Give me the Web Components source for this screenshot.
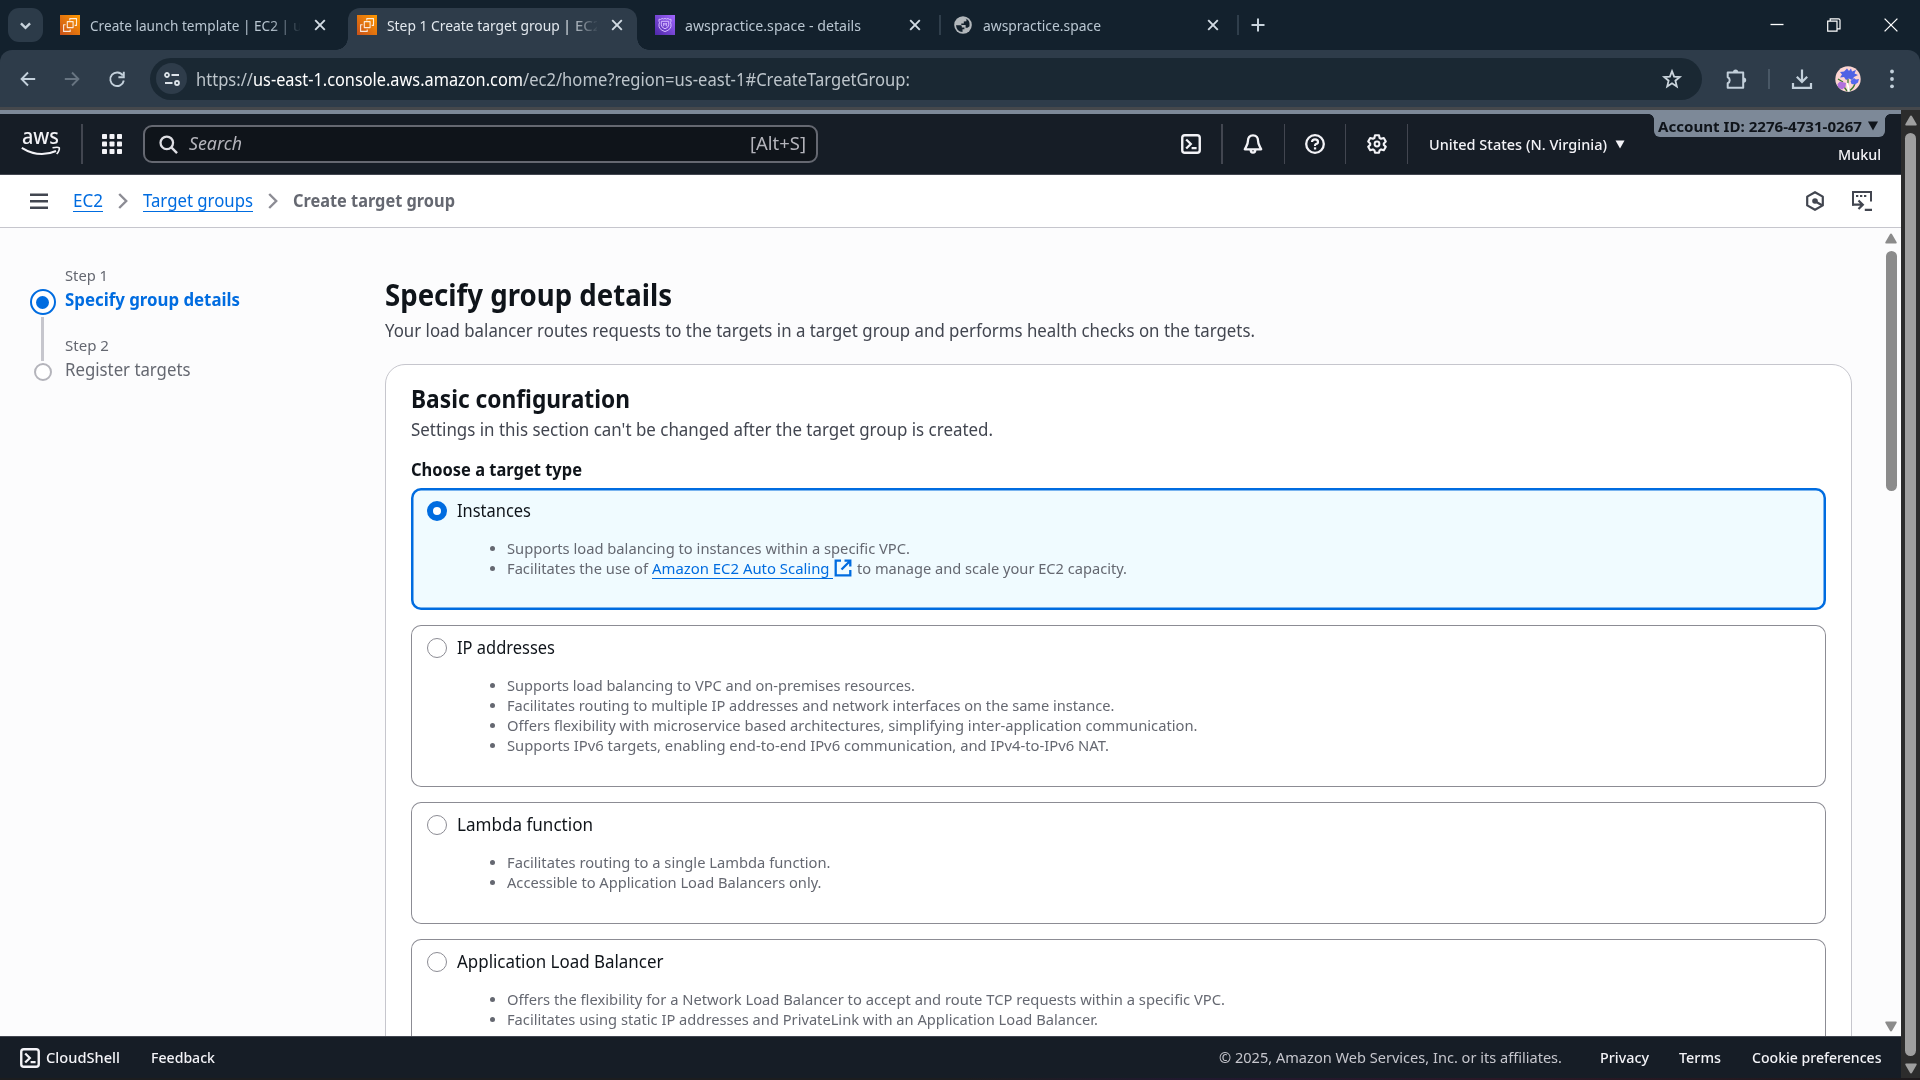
<!DOCTYPE html>
<html lang="en">
<head>
<meta charset="utf-8">
<title>Step 1 Create target group | EC2</title>
<style>
html,body{margin:0;width:1920px;height:1080px;overflow:hidden;background:#13212d}
body{font-family:"Noto Sans","Open Sans",sans-serif;font-size:17.5px;line-height:25px;color:#0f141a}
</style>
</head>
<body>
<app-window></app-window>
<script>
const make = (name, css, html, extra) => {
  const t = document.createElement('template');
  t.innerHTML = `<style>*{box-sizing:border-box}${css}</style>${html}`;
  customElements.define(name, class extends HTMLElement {
    constructor(){ super(); this.attachShadow({mode:'open'}).append(t.content.cloneNode(true)); }
    connectedCallback(){ if(extra) extra(this, this.shadowRoot); }
  });
};

const ICONS = {
  chevdown:['0 0 12 12','<path d="M1.8 4l4.2 4.2L10.200 4" fill="none" stroke="currentColor" stroke-width="2.200"/>'],
  x:['0 0 12 12','<path d="M1.200 1.200l9.600 9.600M10.800 1.200L1.200 10.800" stroke="currentColor" stroke-width="1.900"/>'],
  plus:['0 0 14 14','<path d="M7 .5v13M.5 7h13" stroke="currentColor" stroke-width="2"/>'],
  ec2:['0 0 20 20','<defs><linearGradient id="g" x1="0" y1="1" x2="1" y2="0"><stop offset="0" stop-color="#c8511b"/><stop offset="1" stop-color="#f90"/></linearGradient></defs><path d="M0 0h20v20H0z" fill="url(#g)"/><path d="M9.800 5.500V3.600h6.700v6.800h-1.800M7.300 6.600h5.800v6H7.300zM5.600 9.700H3.600v6.700h6.600v-1.900" fill="none" stroke="#fff" stroke-opacity=".85" stroke-width="1.100" stroke-linejoin="round"/>'],
  shield:['0 0 20 20','<defs><linearGradient id="g" x1="0" y1="1" x2="1" y2="0"><stop offset="0" stop-color="#4d27a8"/><stop offset="1" stop-color="#a166ff"/></linearGradient></defs><path d="M0 0h20v20H0z" fill="url(#g)"/><path d="M4 4.200q2 .8 3-.7q1.500 1 3 0q1.500 1 3 0q1 1.500 3 .7v2q-1 1.300 0 3.200q.8 5-6 7.200q-6.800-2.200-6-7.200q1-1.900 0-3.200z M6.300 6.300h7.400v3.500q0 2.800-3.700 4q-3.700-1.200-3.700-4zM8.700 11.200V8l1.300 1.500L11.300 8v3.200" fill="none" stroke="#d5bcff" stroke-width="1"/>'],
  globe:['0 0 18 18','<circle cx="9" cy="9" r="8.800" fill="#b2b7bb"/><path d="M2 9.200h4.600q1.200.1 1.200 1.300v1h2.600v1.800h-1.900v2.600Q2.600 15.800 2 9.200zM10.600 2l1.800 1v2.200l-2.600.3v1.900H7.300v1.700h4.300v2.600h1.900l2-1.500Q16.600 4 10.600 2z" fill="#13212d"/>'],
  back:['0 0 16 16','<path d="M15.200 8H2M8 1.500L1.600 8 8 14.500" fill="none" stroke="currentColor" stroke-width="1.900"/>'],
  fwd:['0 0 16 16','<path d="M.8 8H14M8 1.500L14.400 8 8 14.500" fill="none" stroke="currentColor" stroke-width="1.900"/>'],
  reload:['0 0 16 16','<path d="M13.800 4.500A6.800 6.800 0 1 0 14.800 9.500M14.800 .8v5.400H9.400" fill="none" stroke="currentColor" stroke-width="1.900"/>'],
  tune:['0 0 16 14','<g fill="none" stroke="currentColor" stroke-width="1.800"><circle cx="3" cy="3" r="2"/><path d="M7.500 3H15M1 11h7.500"/><circle cx="13" cy="11" r="2"/></g>'],
  star:['0 0 20 20','<path d="M10 2.200l2.100 5.400 5.700.4-4.400 3.700 1.400 5.700-4.800-3.100-4.800 3.100 1.400-5.700L2.200 8l5.700-.4z" fill="none" stroke="currentColor" stroke-width="1.800"/>'],
  puzzle:['0 0 22 22','<path d="M2.700 4.400h15.500v15.400H2.700v-4.500q2-.8 2-3t-2-3z" fill="none" stroke="currentColor" stroke-width="2" stroke-linejoin="round"/><path d="M8 4.200a2.600 2.800 0 0 1 5.200 0zM18.600 9.500a2.600 2.600 0 0 1 0 5.200z" fill="currentColor"/>'],
  download:['0 0 22 22','<path d="M11 1.500v12M5.800 8.800l5.200 5.200 5.200-5.200M2 15v4.800h18V15" fill="none" stroke="currentColor" stroke-width="2.200"/>'],
  dots:['0 0 4 20','<circle cx="2" cy="2.500" r="1.900"/><circle cx="2" cy="10" r="1.900"/><circle cx="2" cy="17.300" r="1.900"/>'],
  avatar:['0 0 26 26','<defs><clipPath id="c"><circle cx="13" cy="13" r="12.700"/></clipPath></defs><g clip-path="url(#c)"><path d="M0 0h26v26H0z" fill="#fdd5d2"/><path d="M13 13v5l1 8M20 17q-1 5-6 8M3 13l5 3M7 18l5 7" fill="none" stroke="#3b7a2e" stroke-width="1.300"/><path d="M12.500 17l1.500 9" stroke="#fff" stroke-width="2"/><path d="M12 2.500l2 2.500 2-2.500 1 3 4-1.500-1.500 3.500 3.500 1.500-4 2-2 3-3-1.500-3 1.500-2-3-4 .5 2-3L5 6l4-.5z" fill="#4f62e4"/><path d="M19 12l2 1.500 3-.5-1 3.500-3 2-3.500-.5-1-3z" fill="#5568ee"/><path d="M5 15.500l2.500.5 3.500 1-.5 4-3.500 2.500-4-2-.5-3.500z" fill="#b070dd"/></g>'],
  min:['0 0 14 14','<path d="M.5 6.500h13" stroke="currentColor" stroke-width="1.300"/>'],
  restore:['0 0 14 14','<path d="M.7 3.200h9.300v10H.7zM3.200 2.800V.8h8.300q1.500 0 1.500 1.500v8.500h-2.500" fill="none" stroke="currentColor" stroke-width="1.200"/>'],
  close:['0 0 14 14','<path d="M.6.6l12.800 12.800M13.400.6L.6 13.400" stroke="currentColor" stroke-width="1.300"/>'],
  smile:['0 0 40 11','<path d="M.8 1.800Q18 12.500 35 5" fill="none" stroke="currentColor" stroke-width="2"/><path d="M31.500 1.800q5.500-1.200 6.800 0q.5 2.400-2.600 6.300" fill="none" stroke="currentColor" stroke-width="1.600"/>'],
  apps:['0 0 20 20','<g><rect width="5" height="5" rx=".8"/><rect x="7.500" width="5" height="5" rx=".8"/><rect x="15" width="5" height="5" rx=".8"/><rect y="7.500" width="5" height="5" rx=".8"/><rect x="7.500" y="7.500" width="5" height="5" rx=".8"/><rect x="15" y="7.500" width="5" height="5" rx=".8"/><rect y="15" width="5" height="5" rx=".8"/><rect x="7.500" y="15" width="5" height="5" rx=".8"/><rect x="15" y="15" width="5" height="5" rx=".8"/></g>'],
  search:['0 0 20 20','<circle cx="8.200" cy="8.200" r="6.600" fill="none" stroke="currentColor" stroke-width="2.400"/><path d="M13 13l6 6" stroke="currentColor" stroke-width="2.500"/>'],
  shell:['0 0 20 20','<rect x="1.250" y="1.250" width="17.500" height="17.500" rx="2.600" fill="none" stroke="currentColor" stroke-width="2.400"/><path d="M5.200 5.500l4.600 4.500-4.600 4.500M10.600 14.200h5" fill="none" stroke="currentColor" stroke-width="2.300"/>'],
  bell:['0 0 20 20','<path d="M10 1.300c-3.600 0-5 2.700-5 5.200 0 4.200-1.700 5.700-3.200 8.800h16.400C16.700 12.200 15 10.700 15 6.500c0-2.500-1.400-5.200-5-5.200zM7.600 15.500q0 3.100 2.400 3.100t2.400-3.100" fill="none" stroke="currentColor" stroke-width="2.300" stroke-linejoin="round"/>'],
  help:['0 0 20 20','<circle cx="10" cy="10" r="8.800" fill="none" stroke="currentColor" stroke-width="2.300"/><path d="M7 8Q7 5.300 10 5.300T13 7.900Q13 9.600 10.900 10Q10 10.300 10 12" fill="none" stroke="currentColor" stroke-width="2.200"/><path d="M8.900 13.300h2.300v2.200H8.900z"/>'],
  gear:['0 0 20 20','<path d="M8 1.300h4l.6 2.700 1.500.8 2.700-.8 2 3.500-2 1.900v1.500l2 1.800-2 3.500-2.700-.8-1.500.9-.6 2.500H8l-.6-2.500-1.500-.9-2.700.8-2-3.500 2-1.800V9.400l-2-1.900 2-3.500 2.700.8L7.400 4z" fill="none" stroke="currentColor" stroke-width="2.100" stroke-linejoin="round"/><circle cx="10" cy="10" r="2.400" fill="none" stroke="currentColor" stroke-width="2"/>'],
  down:['0 0 10 10','<path d="M0 .5h10L5 9.500z"/>'],
  up:['0 0 12 11','<path d="M6 .5q.7 0 1.200.9l4.500 7.800q.3 1.300-.8 1.300H1.100Q0 10.500.3 9.200l4.500-7.800Q5.300.5 6 .5z"/>'],
  dn:['0 0 12 11','<path d="M6 10.500q-.7 0-1.200-.9L.3 1.800Q0 .5 1.100.5h9.800q1.100 0 .8 1.300L7.200 9.600q-.5.9-1.200.9z"/>'],
  menu:['0 0 18 16','<path d="M0 1.700h18M0 8.200h18M0 14.700h18" stroke="currentColor" stroke-width="2.500"/>'],
  crumb:['0 0 10 16','<path d="M1.200 1l7 7-7 7" fill="none" stroke="currentColor" stroke-width="2.400"/>'],
  hex:['0 0 20 20','<path d="M10 1.200l7.800 4.400v8.800L10 18.800l-7.800-4.400V5.600z" fill="none" stroke="currentColor" stroke-width="2.200" stroke-linejoin="round"/><circle cx="10" cy="10" r="2.800"/><path d="M10.500 10.500l6.500 3.700" stroke="currentColor" stroke-width="2.200"/>'],
  panel:['0 0 20 20','<path d="M1 14.600V1h18v9.500" fill="none" stroke="currentColor" stroke-width="2"/><path d="M4 4h2.300v2H4zM8 4h2.300v2H8zM12 4h2.300v2H12zM12.800 17.800H20V20h-7.200z"/><path d="M0 13.700h10M6.500 9.500l4.300 4.200-4.300 4.300" fill="none" stroke="currentColor" stroke-width="2.200"/>'],
  ext:['0 0 18 18','<path d="M7 1.700H1.700v14.600h14.600V11M10.500 1.700h5.800v5.800M16 2L7.500 10.500" fill="none" stroke="currentColor" stroke-width="2.300"/>'],
};

make('ui-icon', ':host{display:block;flex:none}svg{display:block;width:100%;height:100%;fill:currentColor;overflow:visible}', '<div></div>', (h, r) => {
  const i = ICONS[h.getAttribute('name')];
  const w = h.getAttribute('w') || 20, ht = h.getAttribute('h') || w;
  h.style.width = w + 'px'; h.style.height = ht + 'px';
  const d = r.querySelector('div'); d.style.cssText = 'width:100%;height:100%';
  d.innerHTML = `<svg viewBox="${i[0]}">${i[1]}</svg>`;
});

make('v-bar', ':host{display:block;flex:none;width:2px;height:40px;background:#424650}', '');

make('browser-tab', `
:host{display:flex;align-items:center;flex:none;width:297.500px;height:50px;padding:0 0 0 9px;position:relative;font-size:15px;line-height:20px;color:#b9c6d1}
:host([active]){color:#e2e8ee}
:host([active])::before{content:"";position:absolute;z-index:0;left:0;top:8px;width:289px;height:42px;background:#2e3c4a;border-radius:12px 12px 0 0}
.fl{display:none}
:host([active]) .fl{display:block;position:absolute;bottom:0;width:12px;height:12px}
.l{left:-12px;background:radial-gradient(circle at 0 0,transparent 11.500px,#2e3c4a 12px)}
.r{left:289px;background:radial-gradient(circle at 100% 0,transparent 11.500px,#2e3c4a 12px)}
.t{position:relative;flex:none;display:flex;gap:4px;width:210px;height:20px;margin-left:10px;overflow:hidden;white-space:nowrap;-webkit-mask:linear-gradient(90deg,#000 180px,transparent 212px)}
.x{position:relative;margin-left:14px;color:#d3dce4}
.ic{position:relative;width:20px;display:flex;justify-content:center}
.s{width:2px;height:20px;background:#2f3e4b;margin-left:18px;display:none}
:host([sep]) .s{display:block}`,
'<i class="fl l"></i><i class="fl r"></i><div class="ic"><slot name="icon"></slot></div><div class="t"><slot></slot></div><ui-icon class="x" name="x" w="12"></ui-icon><div class="s"></div>');

make('tab-strip', `:host{display:flex;height:50px;align-items:center;padding-left:8px;background:#13212d;color:#c8d3dc}
.b{width:35px;height:34px;border-radius:11px;background:#2c3b49;display:flex;align-items:center;justify-content:center;margin-right:8px}
.w{margin-left:auto;display:flex;gap:43px;align-items:center;padding-right:22px;color:#fff}`,
`<div class="b"><ui-icon name="chevdown" w="13"></ui-icon></div>
<browser-tab><ui-icon slot="icon" name="ec2"></ui-icon><fit-text w="199">Create launch template | EC2 |</fit-text><span>u</span></browser-tab>
<browser-tab active style="margin-left:-.5px;margin-right:.5px"><ui-icon slot="icon" name="ec2"></ui-icon><fit-text w="184">Step 1 Create target group |</fit-text><span>EC2</span></browser-tab>
<browser-tab sep><ui-icon slot="icon" name="shield"></ui-icon><fit-text w="176">awspractice.space - details</fit-text></browser-tab>
<browser-tab sep><ui-icon slot="icon" name="globe" w="18"></ui-icon><fit-text w="118">awspractice.space</fit-text></browser-tab>
<ui-icon name="plus" w="14" style="margin-left:10px"></ui-icon>
<div class="w"><ui-icon name="min" w="14"></ui-icon><ui-icon name="restore" w="14"></ui-icon><ui-icon name="close" w="14"></ui-icon></div>`);

make('address-bar', `:host{display:block;background:#13212d}
.in{display:flex;align-items:center;height:57px;background:#2e3c4a;border-radius:12px 12px 0 0;padding:0 26px 0 20px;color:#c3d0db}
.u{display:flex;align-items:center;width:1552px;height:42px;margin-left:25px;border-radius:21px;background:#1a2833;padding:0 20px 0 6px;color:#bdc5cb;font-size:17.500px}
.u fit-text{margin-top:1px}
.c{width:31px;height:31px;border-radius:50%;background:#2e3c4a;display:flex;align-items:center;justify-content:center;margin-right:9px;color:#dce3e9}
.h{color:#fff}`,
`<div class="in"><ui-icon name="back" w="16"></ui-icon><ui-icon name="fwd" w="16" style="margin-left:28px;color:#677481"></ui-icon><ui-icon name="reload" w="16" style="margin-left:29px"></ui-icon>
<div class="u"><div class="c"><ui-icon name="tune" w="16" h="14"></ui-icon></div><fit-text w="57">https://</fit-text><fit-text class="h" w="270">us-east-1.console.aws.amazon.com</fit-text><fit-text w="387">/ec2/home?region=us-east-1#CreateTargetGroup:</fit-text><ui-icon name="star" w="20" style="margin-left:auto;color:#cbd5dd"></ui-icon></div>
<ui-icon name="puzzle" w="22" style="margin-left:23px"></ui-icon><v-bar style="height:20px;background:#495866;margin-left:21px"></v-bar><ui-icon name="download" w="22" style="margin-left:21px"></ui-icon><ui-icon name="avatar" w="26" style="margin-left:22px"></ui-icon><ui-icon name="dots" w="4" h="20" style="margin-left:29px"></ui-icon></div>`);

make('aws-header', `:host{display:flex;align-items:center;height:65px;background:#161d26;border-top:4px solid #7d8998;border-bottom:1px solid #424650;color:#f3f3f7;font-size:15px;line-height:20px;font-weight:500}
.logo{width:40px;margin:0 20px 0 21px;height:60px;display:flex;flex-direction:column;padding-top:12px}
.logo fit-text{font-size:21px;line-height:20px;height:20px;font-weight:500;margin-left:1px}
.s{display:flex;align-items:center;width:675px;height:38px;margin-left:21px;border:2px solid #656871;border-radius:9px;background:#0f141a;padding:0 10px 0 14px;font-size:17.500px;line-height:24px;color:#b4b4bb;font-weight:400}
.s fit-text{margin-top:-2px}
.s ui-icon{color:#dedee3;margin-right:11px}
.s .k{margin-left:auto}
.acc{align-self:flex-start;margin-left:auto;margin-right:16px;width:231px;display:flex;flex-direction:column;align-items:flex-end}
.badge{position:relative;width:231px;height:23px;background:#7d8998;border-radius:0 0 6px 6px;color:#0f141a;display:flex;align-items:center;padding:4px 7px 4px 4px;font-weight:700;justify-content:space-between}
.badge::before,.badge::after{content:"";position:absolute;top:0;width:5px;height:5px}
.badge::before{left:-5px;background:radial-gradient(circle at 0 100%,transparent 4.500px,#7d8998 5px)}
.badge::after{right:-5px;background:radial-gradient(circle at 100% 100%,transparent 4.500px,#7d8998 5px)}
.m{margin:7px 4px 0 0}`,
`<div class="logo"><fit-text w="37">aws</fit-text><ui-icon name="smile" w="40" h="11"></ui-icon></div><v-bar></v-bar><ui-icon name="apps" style="margin-left:19px"></ui-icon>
<div class="s"><ui-icon name="search" w="19"></ui-icon><fit-text w="53" style="font-style:italic">Search</fit-text><fit-text class="k" w="56">[Alt+S]</fit-text></div>
<ui-icon name="shell" style="margin-left:363px"></ui-icon><v-bar style="margin-left:20px"></v-bar><ui-icon name="bell" style="margin-left:20px"></ui-icon><v-bar style="margin-left:21px;width:1px"></v-bar><ui-icon name="help" style="margin-left:20px"></ui-icon><v-bar style="margin-left:20px;width:1px"></v-bar><ui-icon name="gear" style="margin-left:21px"></ui-icon><v-bar style="margin-left:20px;width:1px"></v-bar>
<fit-text w="178" style="margin-left:21px">United States (N. Virginia)</fit-text><ui-icon name="down" w="10" h="9" style="margin-left:8px"></ui-icon>
<div class="acc"><div class="badge"><fit-text w="204">Account ID: 2276-4731-0267</fit-text><ui-icon name="down" w="10" h="10"></ui-icon></div><fit-text class="m" w="43">Mukul</fit-text></div>`);

make('crumb-bar', `:host{display:flex;align-items:center;height:53px;background:#fff;border-bottom:1px solid #c6c6cd;padding:0 29px 0 30px;color:#424650}
.a{color:#006ce0;border-bottom:1px solid #006ce0;height:22px;line-height:22px;margin-top:-1px}
.c{color:#8c8c94;margin:0 15px}
.b{font-weight:700;color:#656871;margin:-2px 0 0 0}`,
`<ui-icon name="menu" w="18" h="16"></ui-icon><fit-text class="a" w="30" style="margin-left:25px">EC2</fit-text><ui-icon class="c" name="crumb" w="10" h="16"></ui-icon><fit-text class="a" w="110">Target groups</fit-text><ui-icon class="c" name="crumb" w="10" h="16"></ui-icon><fit-text class="b" w="162">Create target group</fit-text>
<ui-icon name="hex" style="margin-left:auto"></ui-icon><ui-icon name="panel" style="margin-left:27px"></ui-icon>`);

make('step-nav', `:host{display:flex;width:385px;flex:none;padding:37px 0 0 29px;color:#656871}
.m{width:27px;display:flex;flex-direction:column;align-items:center;padding-top:24px;gap:2px;flex:none}
.on{width:26px;height:26px;border:2.500px solid #006ce0;border-radius:50%;padding:4.500px;background:#fff}
.on::before{content:"";display:block;width:100%;height:100%;border-radius:50%;background:#006ce0}
.ln{width:3px;height:44px;background:#c6c6cd}
.off{width:18px;height:18px;border:2.500px solid #b4b4bb;border-radius:50%;background:#fff}
.t{margin-left:8.500px}
.s{font-size:15px;line-height:20px}
.b{font-weight:700;color:#006ce0;margin:2px 0 23px}
.n{margin-top:2px}`,
`<div class="m"><div class="on"></div><div class="ln"></div><div class="off"></div></div>
<div class="t"><fit-text class="s" w="43">Step 1</fit-text><fit-text class="b" w="175">Specify group details</fit-text><fit-text class="s" w="44">Step 2</fit-text><fit-text class="n" w="125.500">Register targets</fit-text></div>`);

make('bullet-row', `:host{display:flex;align-items:center;height:20px;font-size:15px;line-height:20px;color:#656871}
i{width:5px;height:5px;border-radius:50%;background:#656871;margin:0 12px 0 79px}`, '<i></i><slot></slot>');

make('option-tile', `:host{display:block;height:122px;padding:10px 0 0 0;border-radius:10px;box-shadow:inset 0 0 0 1px #8c8c94;margin-bottom:15px;background:#fff}
:host([tall]){height:162px}
:host([selected]){background:#f0fbff;box-shadow:inset 0 0 0 2.500px #006ce0}
.h{display:flex;align-items:center;height:25px;padding-left:16px;margin-bottom:15px}
.r{width:20px;height:20px;border-radius:50%;border:1.300px solid #8c8c94;background:#fff;margin-right:10px}
:host([selected]) .r{border:6px solid #006ce0}`,
'<div class="h"><div class="r"></div><slot name="label"></slot></div><slot></slot>');

make('config-card', `:host{display:block;height:1000px;border:1px solid #c6c6cd;border-radius:20px;background:#fff;padding:18px 25px}
.h{font-size:25px;line-height:30px;font-weight:700}
.d{color:#424650;margin:4px 0 15px}
.l{font-weight:700;margin-bottom:6px}
.a{color:#006ce0;border-bottom:1.250px solid #006ce0;height:20px;line-height:20px;margin:1px 0 0 4px;padding-right:3px}
bullet-row ui-icon{color:#006ce0}`,
`<fit-text class="h" w="219">Basic configuration</fit-text><fit-text class="d" w="582">Settings in this section can't be changed after the target group is created.</fit-text><fit-text class="l" w="171">Choose a target type</fit-text>
<option-tile selected><fit-text slot="label" w="74">Instances</fit-text>
<bullet-row><fit-text w="403">Supports load balancing to instances within a specific VPC.</fit-text></bullet-row>
<bullet-row><fit-text w="141">Facilitates the use of</fit-text><fit-text class="a" w="177.500">Amazon EC2 Auto Scaling</fit-text><ui-icon name="ext" w="18" style="margin:0 5px 0 1px"></ui-icon><fit-text w="270">to manage and scale your EC2 capacity.</fit-text></bullet-row></option-tile>
<option-tile tall><fit-text slot="label" w="98">IP addresses</fit-text>
<bullet-row><fit-text w="408">Supports load balancing to VPC and on-premises resources.</fit-text></bullet-row>
<bullet-row><fit-text w="607.500">Facilitates routing to multiple IP addresses and network interfaces on the same instance.</fit-text></bullet-row>
<bullet-row><fit-text w="690.500">Offers flexibility with microservice based architectures, simplifying inter-application communication.</fit-text></bullet-row>
<bullet-row><fit-text w="602">Supports IPv6 targets, enabling end-to-end IPv6 communication, and IPv4-to-IPv6 NAT.</fit-text></bullet-row></option-tile>
<option-tile><fit-text slot="label" w="136">Lambda function</fit-text>
<bullet-row><fit-text w="323.500">Facilitates routing to a single Lambda function.</fit-text></bullet-row>
<bullet-row><fit-text w="314.500">Accessible to Application Load Balancers only.</fit-text></bullet-row></option-tile>
<option-tile><fit-text slot="label" w="206.500">Application Load Balancer</fit-text>
<bullet-row><fit-text w="718">Offers the flexibility for a Network Load Balancer to accept and route TCP requests within a specific VPC.</fit-text></bullet-row>
<bullet-row><fit-text w="591">Facilitates using static IP addresses and PrivateLink with an Application Load Balancer.</fit-text></bullet-row></option-tile>`);

make('scroll-track', `:host{display:flex;flex-direction:column;align-items:center;color:var(--c);flex:none}
.t{width:11px;border-radius:6px;background:var(--c);margin-top:7px;height:var(--h)}
.d{margin-top:auto}`,
'<ui-icon name="up" w="12" h="11"></ui-icon><div class="t"></div><ui-icon class="d" name="dn" w="12" h="11"></ui-icon>');

make('page-body', `:host{display:flex;height:808px;background:#fcfcfd;overflow:hidden}
main{width:1467px;padding-top:48px}
.h1{font-size:30px;line-height:38px;font-weight:700}
.sub{color:#424650;margin:4px 0 21px}
scroll-track{--c:#8b8b8b;--h:240px;width:12px;margin-left:33px;padding:5px 0 4px;height:808px;align-items:center}`,
`<step-nav></step-nav><main><fit-text class="h1" w="287">Specify group details</fit-text><fit-text class="sub" w="870">Your load balancer routes requests to the targets in a target group and performs health checks on the targets.</fit-text><config-card></config-card></main><scroll-track></scroll-track>`);

make('aws-footer', `:host{display:flex;align-items:center;height:42px;background:#161d26;border-top:1px solid #424650;padding:0 20px 0 20px;font-size:15px;line-height:20px;color:#f3f3f7;font-weight:500}
fit-text{margin-top:-2px}
.c{margin-left:auto;color:#c6c6cd;font-weight:400}`,
`<ui-icon name="shell"></ui-icon><fit-text w="74" style="margin-left:6px">CloudShell</fit-text><fit-text w="64" style="margin-left:31px">Feedback</fit-text>
<fit-text class="c" w="343">© 2025, Amazon Web Services, Inc. or its affiliates.</fit-text><fit-text w="49" style="margin-left:38px">Privacy</fit-text><fit-text w="42" style="margin-left:30px">Terms</fit-text><fit-text w="129.500" style="margin-left:30.500px">Cookie preferences</fit-text>`);

make('app-window', `:host{display:flex;flex-direction:column;width:1920px;height:1080px}
.e{height:3px;background:#45484c}
.row{display:flex;height:968px}
.p{width:1901px}
.o{--c:#9f9f9f;--h:923px;width:19px;background:#2c2c2c;padding:5px 0 4px;height:968px}
.z{height:2px;background:linear-gradient(90deg,#1c1d1f 0 50%,#21192f 62%,#2a1826 78%,#1e1a1c)}`,
`<tab-strip></tab-strip><address-bar></address-bar><div class="e"></div><div class="row"><div class="p"><aws-header></aws-header><crumb-bar></crumb-bar><page-body></page-body><aws-footer></aws-footer></div><scroll-track class="o"></scroll-track></div><div class="z"></div>`);

/* Text run condensed or stretched to the width given by its w attribute. Defined last so ancestors are already styled. */
make('fit-text', ':host{display:block;flex:none;white-space:nowrap;box-sizing:content-box!important}span{display:inline-block;vertical-align:top;transform-origin:0 0}', '<span><slot></slot></span>', (h, r) => {
  const s = r.querySelector('span'), w = +h.getAttribute('w');
  h.style.width = w + 'px';
  const n = s.getBoundingClientRect().width;
  s.style.transform = `scaleX(${w / n})`;
});
</script>
</body>
</html>
